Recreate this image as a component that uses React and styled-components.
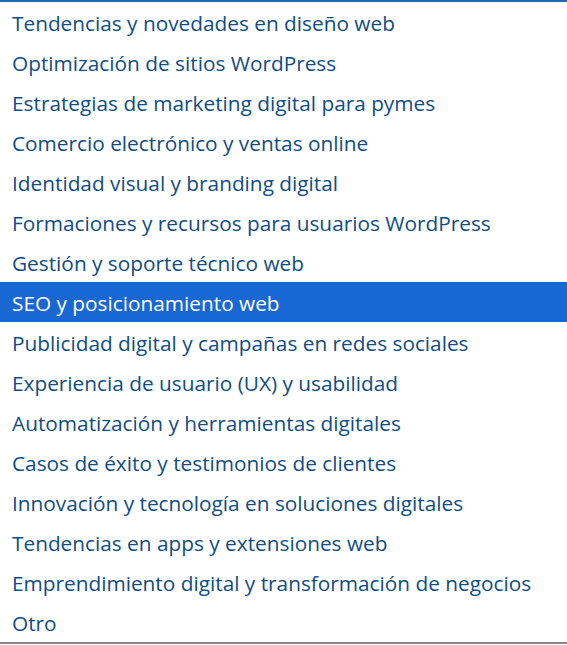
import React from "react";
import styled, { createGlobalStyle } from "styled-components";

const GlobalStyle = createGlobalStyle`
  html, body {
    margin: 0;
    padding: 0;
    background: #ffffff;
  }
`;

const List = styled.ul`
  list-style: none;
  margin: 0;
  padding: 0;
  width: 567px;
  border-top: 2px solid #2466a8;
  border-bottom: 2px solid #8a8a8a;
  font-family: "Open Sans", "Noto Sans", sans-serif;
`;

const Option = styled.li`
  height: 40px;
  display: flex;
  align-items: center;
  padding: 1px 0 0 12px;
  box-sizing: border-box;
  font-size: 20.8px;
  color: ${(p) => (p.selected ? "#ffffff" : "#0f4d85")};
  background: ${(p) => (p.selected ? "#1967d2" : "transparent")};
  white-space: nowrap;
`;

const options = [
  "Tendencias y novedades en diseño web",
  "Optimización de sitios WordPress",
  "Estrategias de marketing digital para pymes",
  "Comercio electrónico y ventas online",
  "Identidad visual y branding digital",
  "Formaciones y recursos para usuarios WordPress",
  "Gestión y soporte técnico web",
  "SEO y posicionamiento web",
  "Publicidad digital y campañas en redes sociales",
  "Experiencia de usuario (UX) y usabilidad",
  "Automatización y herramientas digitales",
  "Casos de éxito y testimonios de clientes",
  "Innovación y tecnología en soluciones digitales",
  "Tendencias en apps y extensiones web",
  "Emprendimiento digital y transformación de negocios",
  "Otro",
];

export default function App() {
  return (
    <>
      <GlobalStyle />
      <List>
        {options.map((o, i) => (
          <Option key={o} selected={i === 7}>
            {o}
          </Option>
        ))}
      </List>
    </>
  );
}
